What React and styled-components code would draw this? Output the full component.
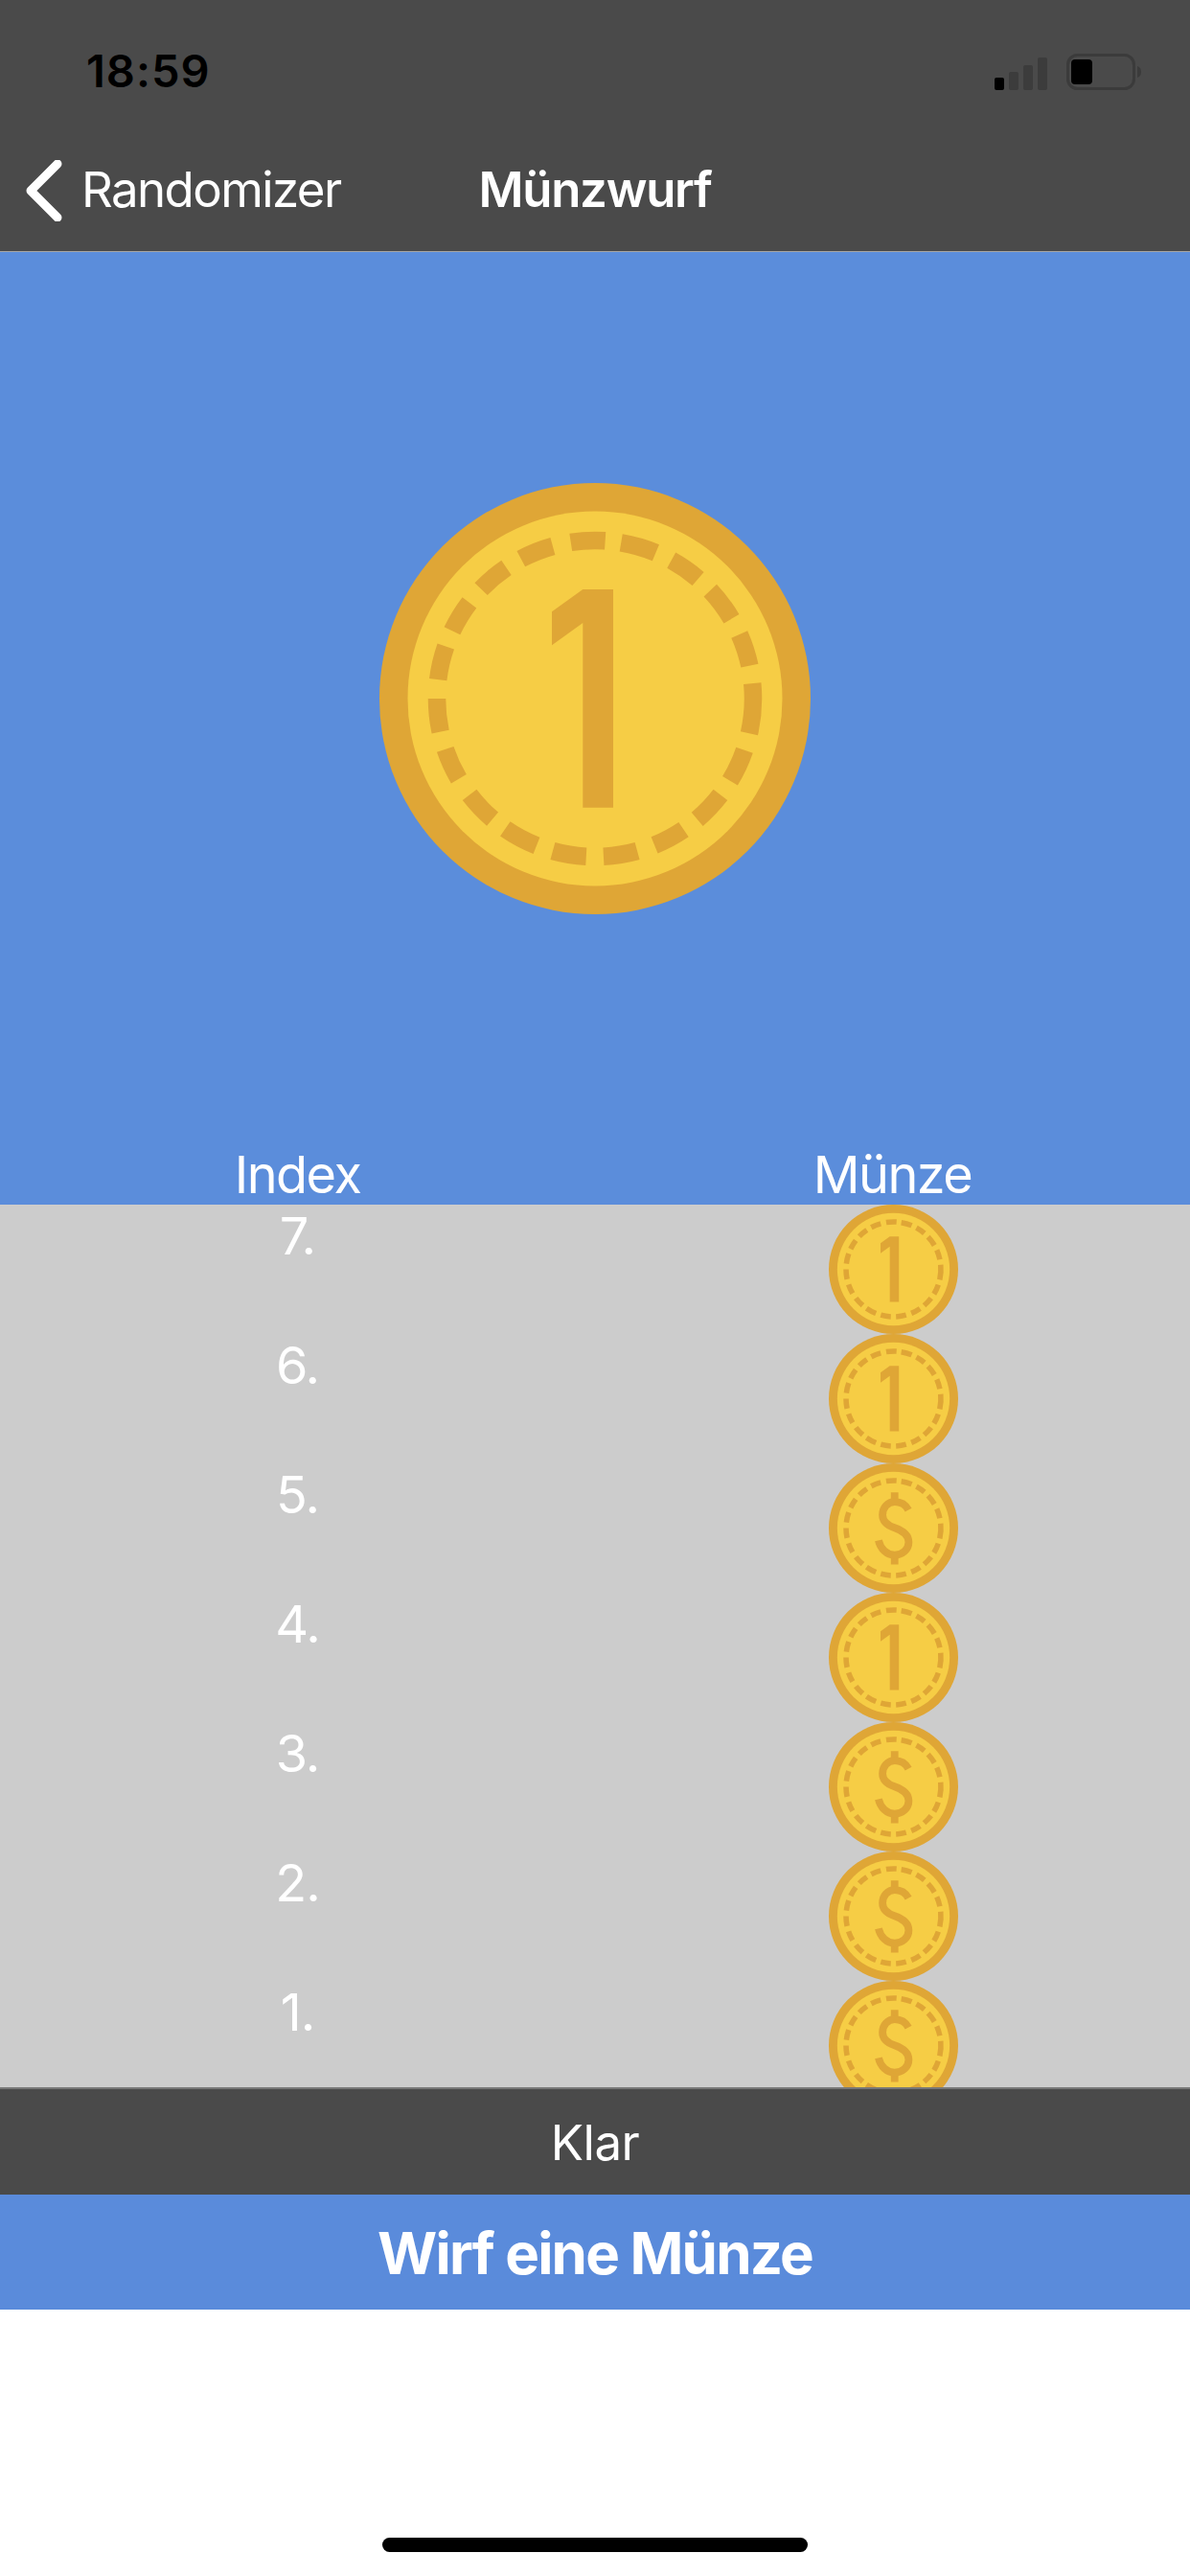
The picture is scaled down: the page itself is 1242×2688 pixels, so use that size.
import React from "react";
import styled, { createGlobalStyle } from "styled-components";

const Global = createGlobalStyle`
  html, body { margin: 0; padding: 0; background: #fff; }
  body { font-family: Inter, "Liberation Sans", sans-serif; color: #fff; }
`;

const Screen = styled.div`
  width: 1242px;
  height: 2688px;
  overflow: hidden;
  display: flex;
  flex-direction: column;
  background: #fff;
`;

const Top = styled.header`
  height: 262px;
  background: #4a4a4a;
  border-bottom: 1px solid #a6a6a6;
  display: flex;
  flex-direction: column;
`;

const StatusBar = styled.div`
  height: 150px;
  box-sizing: border-box;
  padding: 49px 51px 0 90px;
  display: flex;
  justify-content: space-between;
  align-items: flex-start;
`;

const Time = styled.span`
  font-size: 47px;
  line-height: 50px;
  font-weight: 600;
  letter-spacing: 1px;
  color: #000;
`;

const StatusIcons = styled.svg`
  display: block;
  width: 153px;
  height: 44px;
  margin-top: 2px;
`;

const Nav = styled.nav`
  flex: 1;
  display: grid;
  grid-template-columns: 1fr auto 1fr;
  align-items: center;
  padding-bottom: 16px;
`;

const Back = styled.div`
  display: flex;
  align-items: center;
  gap: 20px;
  padding-left: 27px;
`;

const Chevron = styled.svg`
  display: block;
  width: 38px;
  height: 64px;
  margin-top: 2px;
`;

const NavLabel = styled.span`
  font-size: 51px;
  line-height: 60px;
  letter-spacing: -1.6px;
  white-space: nowrap;
`;

const Title = styled.h1`
  margin: 0;
  font-size: 51px;
  line-height: 60px;
  font-weight: 600;
  letter-spacing: -1.3px;
`;

const Hero = styled.section`
  height: 994px;
  background: #5b8ddb;
  display: flex;
  flex-direction: column;
  align-items: center;
  padding-top: 241px;
  box-sizing: border-box;
`;

const HeroCoin = styled.div`
  width: 450px;
  height: 450px;
  flex: none;
`;

const Columns = styled.div`
  margin-top: auto;
  align-self: stretch;
  display: grid;
  grid-template-columns: 1fr 1fr;
  font-size: 54px;
  line-height: 62px;
  text-align: center;
  letter-spacing: -1.5px;
`;

const List = styled.div`
  height: 921px;
  background: #cccccc;
  overflow: hidden;
  flex: none;
`;

const Row = styled.div`
  height: 135px;
  display: grid;
  grid-template-columns: 1fr 1fr;
`;

const RowIndex = styled.div`
  text-align: center;
  font-size: 54px;
  line-height: 62px;
  letter-spacing: -1px;
  color: #fff;
  padding-top: 2px;
`;

const RowCoin = styled.div`
  width: 135px;
  height: 135px;
  justify-self: center;
  margin-left: 2px;
`;

const Done = styled.div`
  height: 112px;
  box-sizing: border-box;
  background: #4a4a4a;
  border-top: 2px solid #777;
  display: flex;
  align-items: center;
  justify-content: center;
  font-size: 51px;
  letter-spacing: -0.5px;
`;

const Toss = styled.div`
  height: 120px;
  background: #5a8bdb;
  display: flex;
  align-items: center;
  justify-content: center;
  padding-top: 2px;
  box-sizing: border-box;
  font-size: 60px;
  font-weight: 700;
  letter-spacing: -1.8px;
`;

const Spacer = styled.div`
  flex: 1;
  display: flex;
  justify-content: center;
  align-items: flex-end;
  padding-bottom: 25px;
`;

const HomeBar = styled.div`
  width: 444px;
  height: 15px;
  border-radius: 8px;
  background: #000;
`;

const DASHES = [
  [-8.8, 3.7], [9.5, 22.6], [28.9, 40.7], [46.8, 59.7], [66, 78], [84.5, 102.7],
  [109, 121.3], [127.5, 139.7], [145.9, 157.9], [164.5, 176.9], [183.2, 195.5],
  [201.7, 214.6], [220.4, 232.5], [239.5, 251.3], [257.9, 270], [276.9, 289.3],
  [295.4, 307.4], [313.9, 325.9], [332.1, 344.5],
];

const polar = (deg) => {
  const a = (deg * Math.PI) / 180;
  return [225 + 165 * Math.sin(a), 225 - 165 * Math.cos(a)];
};

const arc = ([from, to]) => {
  const [x1, y1] = polar(from);
  const [x2, y2] = polar(to);
  return `M${x1.toFixed(2)} ${y1.toFixed(2)}A165 165 0 0 1 ${x2.toFixed(2)} ${y2.toFixed(2)}`;
};

const CoinArt = styled.svg`
  display: block;
  width: 100%;
  height: 100%;
`;

const Coin = ({ face }) => (
  <CoinArt viewBox="0 0 450 450">
    <circle cx="225" cy="225" r="225" fill="#dfa636" />
    <circle cx="225" cy="225" r="195.5" fill="#f6cd45" />
    <g fill="none" stroke="#dfa636" strokeWidth="18.5">
      {DASHES.map((d) => <path key={d[0]} d={arc(d)} />)}
    </g>
    {face === "one" ? (
      <path d="M212.3 111H244V338.7H212.3V146L180 169.3V134.3Z" fill="#dfa636" />
    ) : (
      <g fill="none" stroke="#dfa636" strokeWidth="26">
        <path d="M229 101V140M229 312V352" />
        <path d="M277 162C268 145 250 134 229 134C205 134 187 154 187 179C187 203 205 216 229 224C255 233 278 247 278 274C278 300 255 319 229 319C202 319 180 298 173 268" />
      </g>
    )}
  </CoinArt>
);

const rows = [
  ["7.", "one"], ["6.", "one"], ["5.", "dollar"], ["4.", "one"],
  ["3.", "dollar"], ["2.", "dollar"], ["1.", "dollar"],
];

export default function App() {
  return (
    <Screen>
      <Global />
      <Top>
        <StatusBar>
          <Time>18:59</Time>
          <StatusIcons viewBox="0 0 153 44">
            <rect x="0" y="30" width="10" height="13" rx="2" fill="#000" />
            <rect x="15" y="24" width="10" height="19" rx="2" fill="#3c3c3c" />
            <rect x="30" y="17" width="10" height="26" rx="2" fill="#3c3c3c" />
            <rect x="45" y="9" width="10" height="34" rx="2" fill="#3c3c3c" />
            <rect x="76.5" y="6.5" width="69" height="35" rx="10" fill="none" stroke="#3b3b3b" strokeWidth="3" />
            <rect x="80" y="11" width="22" height="26" rx="4" fill="#000" />
            <path d="M149 18C152 19 153 21 153 24C153 27 152 29 149 30Z" fill="#3b3b3b" />
          </StatusIcons>
        </StatusBar>
        <Nav>
          <Back>
            <Chevron viewBox="0 0 38 64">
              <path d="M33 4L5 32L33 60" fill="none" stroke="#fff" strokeWidth="9" strokeLinecap="round" strokeLinejoin="round" />
            </Chevron>
            <NavLabel>Randomizer</NavLabel>
          </Back>
          <Title>Münzwurf</Title>
          <div />
        </Nav>
      </Top>
      <Hero>
        <HeroCoin><Coin face="one" /></HeroCoin>
        <Columns>
          <span>Index</span>
          <span>Münze</span>
        </Columns>
      </Hero>
      <List>
        {rows.map(([label, face]) => (
          <Row key={label}>
            <RowIndex>{label}</RowIndex>
            <RowCoin><Coin face={face} /></RowCoin>
          </Row>
        ))}
      </List>
      <Done>Klar</Done>
      <Toss>Wirf eine Münze</Toss>
      <Spacer><HomeBar /></Spacer>
    </Screen>
  );
}
